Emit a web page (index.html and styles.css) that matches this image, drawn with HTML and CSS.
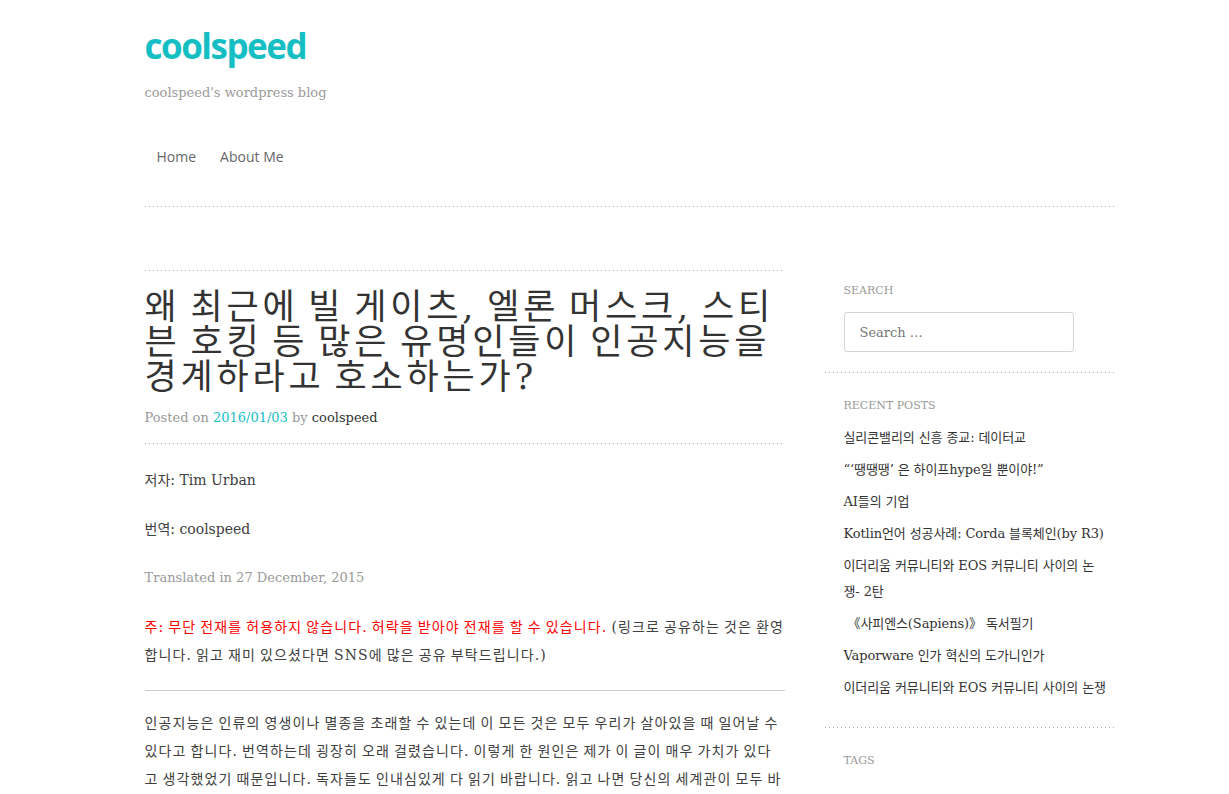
FILE: index.html
```html
<!DOCTYPE html>
<html lang="ko">
<head>
<meta charset="utf-8">
<title>coolspeed</title>
<link rel="stylesheet" href="styles.css">
</head>
<body>
<div class="site">
  <header class="site-header">
    <h1 class="site-title"><a href="#">coolspeed</a></h1>
    <p class="site-desc">coolspeed's wordpress blog</p>
    <nav class="main-nav">
      <ul>
        <li><a href="#">Home</a></li>
        <li><a href="#">About Me</a></li>
      </ul>
    </nav>
  </header>

  <div class="main">
    <main class="content">
      <article>
        <header class="entry-header">
          <h1 class="entry-title">왜 최근에 빌 게이츠, 엘론 머스크, 스티븐 호킹 등 많은 유명인들이 인공지능을 경계하라고 호소하는가?</h1>
          <div class="entry-meta">Posted on <a class="date" href="#">2016/01/03</a> by <a class="author" href="#">coolspeed</a></div>
        </header>
        <div class="entry-content">
          <p>저자: Tim Urban</p>
          <p>번역: coolspeed</p>
          <p class="muted">Translated in 27 December, 2015</p>
          <p class="ko"><span class="warn">주: 무단 전재를 허용하지 않습니다. 허락을 받아야 전재를 할 수 있습니다.</span> (링크로 공유하는 것은 환영합니다. 읽고 재미 있으셨다면 SNS에 많은 공유 부탁드립니다.)</p>
          <hr>
          <p class="ko">인공지능은 인류의 영생이나 멸종을 초래할 수 있는데 이 모든 것은 모두 우리가 살아있을 때 일어날 수 있다고 합니다. 번역하는데 굉장히 오래 걸렸습니다. 이렇게 한 원인은 제가 이 글이 매우 가치가 있다고 생각했었기 때문입니다. 독자들도 인내심있게 다 읽기 바랍니다. 읽고 나면 당신의 세계관이 모두 바뀔 것입니다.</p>
        </div>
      </article>
    </main>

    <aside class="sidebar">
      <section class="widget">
        <h2 class="widget-title">Search</h2>
        <form class="search-form">
          <input class="search-field" type="search" placeholder="Search …">
        </form>
      </section>
      <section class="widget">
        <h2 class="widget-title">Recent Posts</h2>
        <ul class="recent">
          <li><a href="#">실리콘밸리의 신흥 종교: 데이터교</a></li>
          <li><a href="#">“‘땡땡땡’ 은 하이프hype일 뿐이야!”</a></li>
          <li><a href="#">AI들의 기업</a></li>
          <li><a href="#">Kotlin언어 성공사례: Corda 블록체인(by R3)</a></li>
          <li><a href="#">이더리움 커뮤니티와 EOS 커뮤니티 사이의 논쟁- 2탄</a></li>
          <li><a href="#">&nbsp;《사피엔스(Sapiens)》 독서필기</a></li>
          <li><a href="#">Vaporware 인가 혁신의 도가니인가</a></li>
          <li><a href="#">이더리움 커뮤니티와 EOS 커뮤니티 사이의 논쟁</a></li>
        </ul>
      </section>
      <section class="widget">
        <h2 class="widget-title">Tags</h2>
      </section>
    </aside>
  </div>
</div>
</body>
</html>
```

FILE: styles.css
```css
html, body {
  margin: 0;
  padding: 0;
  background: #fff;
}

body {
  color: #404040;
  font-family: "DejaVu Serif", "Noto Sans CJK KR", serif;
  font-size: 14px;
}

a {
  text-decoration: none;
  color: inherit;
}

.site {
  width: 1000px;
  margin: 0 auto;
  padding-left: 30px;
  box-sizing: border-box;
}

/* dotted rules */
.site-header,
.widget {
  background-image: linear-gradient(to right, #aaa 1px, transparent 1px);
  background-size: 4px 1px;
  background-repeat: repeat-x;
  background-position: left bottom;
}

.site-header {
  padding: 28px 0 40px;
}

.site-title {
  margin: 0;
  font-family: "Open Sans", sans-serif;
  font-weight: 700;
  font-size: 35px;
  line-height: 35px;
  letter-spacing: -1.5px;
}

.site-title a {
  color: #15bec3;
}

.site-desc {
  margin: 20px 0 0;
  font-size: 13px;
  line-height: 20px;
  color: #9a9a9a;
}

.main-nav ul {
  display: flex;
  margin: 44px 0 0;
  padding: 0;
  list-style: none;
}

.main-nav a {
  display: block;
  padding: 0 12px;
  font-family: "Open Sans", sans-serif;
  font-size: 14px;
  line-height: 20px;
  color: #666;
}

.main {
  display: flex;
  gap: 40px;
  margin-top: 51px;
}

.content {
  width: 640px;
  flex: none;
  padding-top: 12px;
}

.entry-header {
  padding: 20px 0 14px;
  background-image:
    linear-gradient(to right, #aaa 1px, transparent 1px),
    linear-gradient(to right, #aaa 1px, transparent 1px);
  background-size: 4px 1px, 4px 1px;
  background-repeat: repeat-x, repeat-x;
  background-position: left top, left bottom;
}

.entry-title {
  margin: 0;
  font-size: 35px;
  line-height: 35px;
  font-weight: 400;
  letter-spacing: 3.8px;
  word-spacing: -5px;
  color: #333;
}

.entry-meta {
  margin-top: 11px;
  font-size: 13px;
  line-height: 24px;
  color: #999;
}

.entry-meta .date {
  color: #15bec3;
}

.entry-meta .author {
  color: #333;
}

.entry-content {
  padding-top: 22px;
}

.entry-content p {
  margin: 0 0 21px;
  line-height: 28px;
}

.entry-content .ko {
  letter-spacing: 1.1px;
  word-spacing: -1.5px;
}

.entry-content .muted {
  font-size: 13px;
  color: #999;
}

.warn {
  color: #ff0000;
}

.entry-content hr {
  border: 0;
  height: 1px;
  background: #ccc;
  margin: 0 0 18px;
}

.sidebar {
  width: 289px;
  flex: none;
}

.widget {
  padding: 24px 6px 21px 19px;
}

.widget-title {
  margin: 0 0 10px;
  font-size: 11px;
  line-height: 18px;
  font-weight: 400;
  text-transform: uppercase;
  color: #999;
}

.search-form {
  margin: 0;
  padding-top: 2px;
}

.search-field {
  display: block;
  width: 230px;
  height: 40px;
  box-sizing: border-box;
  margin: 0;
  border: 1px solid #d4d4d4;
  border-radius: 3px;
  padding: 0 15px;
  font-family: "DejaVu Serif", serif;
  font-size: 13px;
  color: #666;
  background: #fff;
  outline: none;
}

.search-field::placeholder {
  color: #777;
}

.recent {
  list-style: none;
  margin: 0;
  padding: 0;
}

.recent li {
  font-size: 13px;
  line-height: 26px;
  margin-bottom: 6px;
  letter-spacing: -0.1px;
}

.recent a {
  color: #333;
}
```
